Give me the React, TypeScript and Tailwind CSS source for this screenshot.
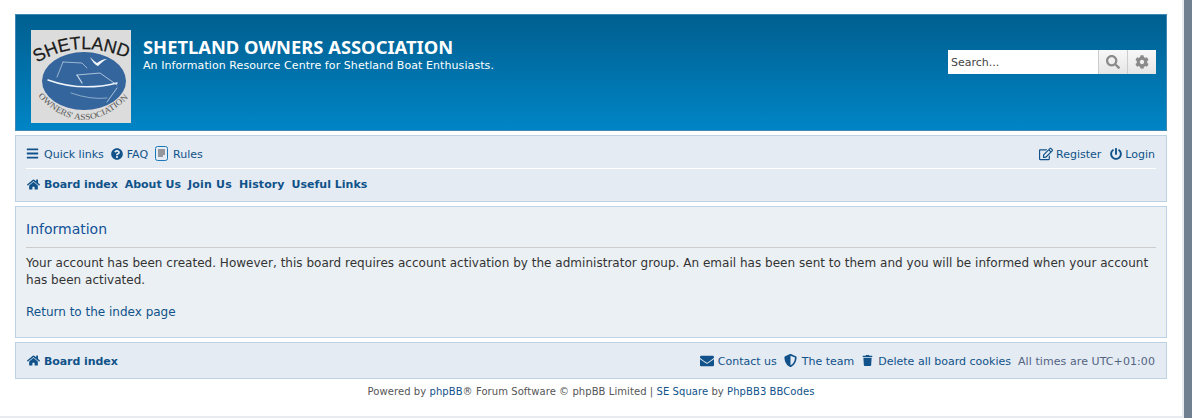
import { FaBars, FaCog, FaEnvelope, FaHome, FaPowerOff, FaQuestionCircle, FaRegEdit, FaSearch, FaShieldAlt, FaTrash } from 'react-icons/fa';
import type { ReactNode } from 'react';

const Logo = () => (
  <svg viewBox="0 0 100 93" className="w-[100px] h-[93px] shrink-0 bg-[#dcdcdc]">
    <defs>
      <path id="topArc" d="M 6 33 Q 46 8 96 28" />
      <path id="bottomArc" d="M 7 66 Q 50 112 96 69" />
    </defs>
    <ellipse cx="53" cy="51" rx="42" ry="29" fill="#34659c" />
    <text className="font-['Liberation_Sans',sans-serif]" fontSize="18" fill="#1a1a1a" stroke="#1a1a1a" strokeWidth="0.25">
      <textPath href="#topArc" textLength="94" lengthAdjust="spacingAndGlyphs">SHETLAND</textPath>
    </text>
    <text className="font-['Liberation_Serif',serif]" fontSize="8.5" fill="#555555">
      <textPath href="#bottomArc" textLength="104" lengthAdjust="spacingAndGlyphs">OWNERS' ASSOCIATION</textPath>
    </text>
    <g fill="none" stroke="#c8d9ec" strokeLinecap="round">
      <path d="M 17 50 Q 50 62 86 53" strokeWidth="1.5" stroke="#eef4fb" />
      <path d="M 40 63 Q 60 70 76 68" strokeWidth="0.6" />
      <path d="M 86 58 L 76 72" strokeWidth="0.8" />
      <path d="M 32 32 L 51 33 L 56 38" strokeWidth="0.7" />
      <path d="M 32 32 L 26 47" strokeWidth="0.7" />
      <path d="M 46 45 L 69 43 L 86 55" strokeWidth="0.8" />
      <path d="M 46 45 L 51 53" strokeWidth="1.2" />
    </g>
    <path d="M 59 27 C 62 30, 64 32, 66 33 C 69 31, 72 29, 76 29 C 72 31, 70 33, 67 36 C 64 35, 61 31, 59 27 Z" fill="#f4f6f8" />
  </svg>
);

const RulesIcon = () => (
  <svg viewBox="0 0 13 15" className="w-[13px] h-[15px]">
    <rect x="0.5" y="0.5" width="12" height="14" rx="2" fill="none" stroke="#1a78b8" />
    <path d="M 3 4 H 10 M 3 6 H 10 M 3 8 H 10 M 3 10 H 8" stroke="#444444" strokeWidth="1" />
  </svg>
);

const NavLink = ({ icon, children, className }: { icon?: ReactNode; children: ReactNode; className?: string }) => (
  <span className={`flex items-center ${className ?? 'gap-[5px]'}`}>
    {icon}
    <span className="pt-[3px]">{children}</span>
  </span>
);

const App = () => {
  return (
    <div className="flex h-[418px] w-[1192px] overflow-hidden bg-white font-['DejaVu_Sans',sans-serif] text-[11px] text-[#105289]">
      <div className="flex w-[1182px] flex-col">
        <div className="h-[416px] px-[15px] pt-[14px]">
          {/* header */}
          <div className="flex h-[117px] items-start justify-between border border-[#3f88b4] bg-gradient-to-b from-[#005f90] to-[#0085c6] pl-[15px] pr-[10px] pt-[15px]">
            <div className="flex items-start gap-[12px]">
              <Logo />
              <div className="pt-[7px] text-white">
                <h1 className="font-['Noto_Sans',sans-serif] text-[18.35px] font-bold leading-[20px]">SHETLAND OWNERS ASSOCIATION</h1>
                <p className="pt-[2px] text-[11px] leading-[13px] tracking-[0.08px]">An Information Resource Centre for Shetland Boat Enthusiasts.</p>
              </div>
            </div>
            <div className="mt-[20px] flex h-[24px] w-[208px] bg-white">
              <span className="flex-1 pl-[3px] pt-[1px] text-[11px] leading-[24px] text-[#444444]">Search...</span>
              <span className="flex w-[30px] items-center justify-center border-x border-[#cccccc] bg-gradient-to-b from-[#f8f8f8] to-[#e6e6e6] text-[#8a8a8a]">
                <FaSearch size={14} />
              </span>
              <span className="flex w-[28px] items-center justify-center bg-gradient-to-b from-[#f8f8f8] to-[#e6e6e6] text-[#8a8a8a]">
                <FaCog size={14} />
              </span>
            </div>
          </div>

          {/* nav bar */}
          <div className="mt-[4px] h-[67px] border border-[#bed2e5] bg-[#e4ebf3] px-[10px]">
            <div className="flex h-[33px] items-center justify-between border-b border-white pt-[3px]">
              <div className="flex items-center gap-[7px]">
                <NavLink icon={<FaBars size={13} />}>Quick links</NavLink>
                <NavLink icon={<FaQuestionCircle size={12} />} className="gap-[4px]">FAQ</NavLink>
                <NavLink icon={<RulesIcon />}>Rules</NavLink>
              </div>
              <div className="flex items-center gap-[9px] pr-[1px]">
                <NavLink icon={<FaRegEdit size={14} />} className="gap-[3px]">Register</NavLink>
                <NavLink icon={<FaPowerOff size={12} />} className="gap-[3px]">Login</NavLink>
              </div>
            </div>
            <div className="flex h-[30px] items-center gap-[7px] font-bold">
              <NavLink icon={<FaHome size={13} className="ml-[1px]" />} className="gap-[4px] tracking-[-0.08px]">Board index</NavLink>
              <span className="pt-[3px]">About Us</span>
              <span className="pt-[3px] tracking-[0.2px]">Join Us</span>
              <span className="pt-[3px] tracking-[0.1px]">History</span>
              <span className="pt-[3px]">Useful Links</span>
            </div>
          </div>

          {/* message */}
          <div className="mt-[4px] h-[132px] border border-[#bed2e5] bg-[#ebf0f4] px-[10px] pt-[12px]">
            <h2 className="border-b border-[#cccccc] pb-[8px] text-[14px] leading-[20px] text-[#115098]">Information</h2>
            <p className="mt-[7px] text-[12px] leading-[17px] tracking-[0.02px] text-[#333333]">
              Your account has been created. However, this board requires account activation by the administrator group. An email has been sent to them and you will be informed when your account has been activated.
            </p>
            <p className="mt-[15px] text-[12px] leading-[17px] text-[#105289]">Return to the index page</p>
          </div>

          {/* footer bar */}
          <div className="mt-[4px] flex h-[37px] items-center justify-between border border-[#bed2e5] bg-[#e4ebf3] pl-[10px] pr-[11px]">
            <NavLink icon={<FaHome size={13} className="ml-[1px]" />} className="gap-[4px] font-bold tracking-[-0.08px]">Board index</NavLink>
            <div className="flex items-center">
              <NavLink icon={<FaEnvelope size={14} />} className="mr-[7px] gap-[4px]">Contact us</NavLink>
              <NavLink icon={<FaShieldAlt size={13} />} className="mr-[8px] gap-[5px]">The team</NavLink>
              <NavLink icon={<FaTrash size={11} />} className="mr-[7px] gap-[5px]">Delete all board cookies</NavLink>
              <span className="pt-[3px] tracking-[0.08px] text-[#536482]">All times are UTC+01:00</span>
            </div>
          </div>

          <p className="mt-[6px] text-center text-[10px] leading-[14px] tracking-[0.07px] text-[#555555]">
            Powered by <span className="text-[#105289]">phpBB</span>® Forum Software © phpBB Limited | <span className="text-[#105289]">SE Square</span> by <span className="text-[#105289]">PhpBB3 BBCodes</span>
          </p>
        </div>
        <div className="h-[2px] bg-[#e8ecf0]" />
      </div>
      <div className="w-[2px] bg-[#e8ecf0]" />
      <div className="w-[8px] bg-[#708090]" />
    </div>
  );
};

export default App;
